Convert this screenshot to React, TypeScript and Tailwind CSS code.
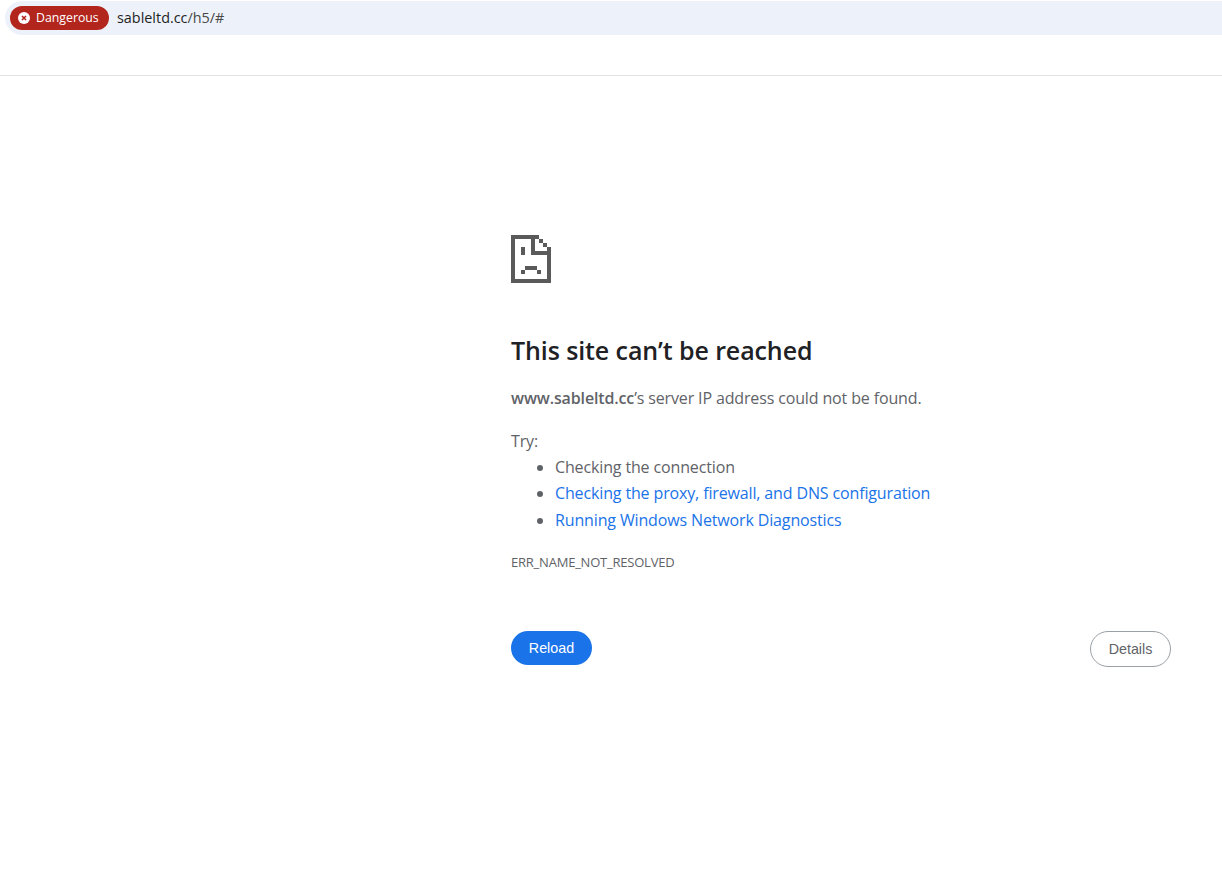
import React from "react";

function SadFile() {
  return (
    <svg width="40" height="48" viewBox="0 0 40 48" shapeRendering="crispEdges" className="block" fill="#5a5a5a">
      <path d="M0 0H24V4H4V44H36V16H40V48H0Z" />
      <path d="M20 4H24V16H36V20H20Z" />
      <rect x="24" y="0" width="4" height="4" />
      <rect x="28" y="4" width="4" height="4" />
      <rect x="32" y="8" width="4" height="4" />
      <rect x="36" y="12" width="4" height="4" />
      <rect x="10" y="12" width="4" height="8" />
      <rect x="14" y="31" width="12" height="4" />
      <rect x="10" y="35" width="4" height="4" />
      <rect x="26" y="35" width="4" height="4" />
    </svg>
  );
}

const seg = "font-['Open_Sans','Noto_Sans',sans-serif]";

export default function App() {
  return (
    <div className={`min-h-[870px] bg-white ${seg}`}>
      <div className="h-[76px] border-b border-[#e3e3e3] pt-px pl-[5px]">
        <div className="flex h-[34px] items-center rounded-l-[17px] bg-[#edf2fa] pl-[5px]">
          <div className="flex h-[24px] w-[99px] items-center rounded-full bg-[#b3261e] pl-[8px] text-white">
            <svg width="12" height="12" viewBox="0 0 12 12" className="block">
              <circle cx="6" cy="6" r="6" fill="#fff" />
              <path d="M4 4L8 8M8 4L4 8" stroke="#b3261e" strokeWidth="1.6" />
            </svg>
            <span className="ml-[6px] text-[12.3px] leading-none">Dangerous</span>
          </div>
          <span className="ml-[8px] text-[14.4px] leading-none text-[#1f1f1f]">
            sableltd.cc<span className="text-[#474747]">/h5/#</span>
          </span>
        </div>
      </div>

      <main className="pt-[159px] pl-[511px] pr-[51px]">
        <SadFile />
        <h1 className="mt-[49px] text-[25px] leading-[36px] font-semibold tracking-[-0.1px] text-[#202124]">
          This site can’t be reached
        </h1>
        <p className="mt-[18px] text-[16px] leading-[24px] tracking-[-0.14px] text-[#5f6368]">
          <strong className="font-semibold">www.sableltd.cc</strong>’s server IP address could not be found.
        </p>
        <p className="mt-[19px] text-[16px] leading-[24px] tracking-[-0.14px] text-[#5f6368]">Try:</p>
        <ul className="mt-px list-disc pl-[44px] text-[16px] leading-[26.4px] tracking-[-0.14px] text-[#5f6368]">
          <li>Checking the connection</li>
          <li>
            <a className="text-[#1a73e8]">Checking the proxy, firewall, and DNS configuration</a>
          </li>
          <li>
            <a className="text-[#1a73e8]">Running Windows Network Diagnostics</a>
          </li>
        </ul>
        <p className="mt-[21px] text-[13px] leading-[16px] tracking-[-0.22px] text-[#5f6368]">ERR_NAME_NOT_RESOLVED</p>
        <div className="mt-[61px] flex items-start justify-between font-['Liberation_Sans',sans-serif]">
          <button className="h-[34px] w-[81px] rounded-full bg-[#1a73e8] text-[14.3px] text-white">Reload</button>
          <button className="h-[36px] w-[81px] rounded-full border border-[#9aa0a6] bg-white text-[14.3px] text-[#5f6368]">
            Details
          </button>
        </div>
      </main>
    </div>
  );
}
